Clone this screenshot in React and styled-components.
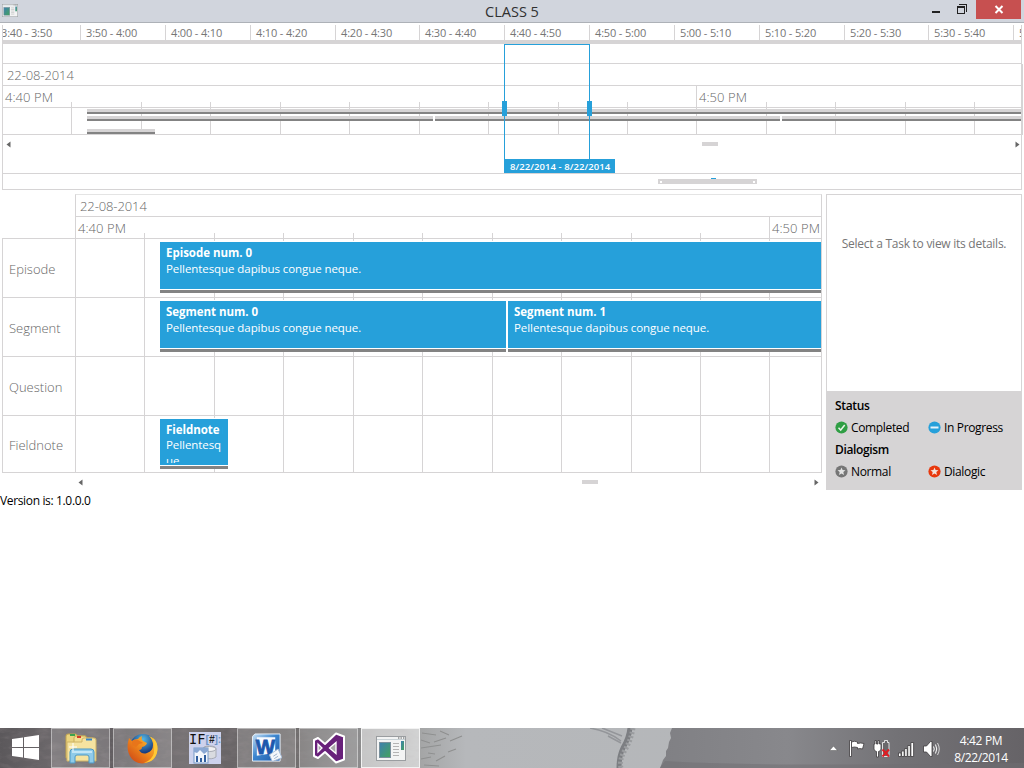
import React from 'react';

import styled, { createGlobalStyle, css } from 'styled-components';

const BLUE = '#26a0da';
const LINE = '#d6d4d5';
const SHADOW = '#838383';
const MUTED = '#767676';
const MUTED_LIGHT = '#666';

const GlobalStyle = createGlobalStyle`
  * {
    box-sizing: border-box;
  }

  body {
    background: white;
    font-family: "Open Sans", "Noto Sans", sans-serif;
    margin: 0;
    overflow: hidden;
  }

  svg {
    display: block;
    flex: none;
  }
`;

const Screen = styled.div`
  display: flex;
  flex-direction: column;
  height: 768px;
  width: 1024px;
`;

/* title bar */

const TitleBar = styled.header`
  background: #d1d5dd;
  border-bottom: 1px solid #adb1b7;
  display: grid;
  grid-template-columns: 140px 1fr 140px;
  height: 23px;
`;

const AppIcon = styled.div`
  padding: 4px 0 0 2px;
`;

const Title = styled.h1`
  color: #303030;
  font-size: 14.5px;
  font-weight: 400;
  letter-spacing: 0;
  line-height: 23px;
  margin: 0;
  text-align: center;
`;

const WindowButtons = styled.div`
  display: flex;
  justify-content: flex-end;
  padding-right: 3px;
`;

const WindowButton = styled.button`
  background: ${(props) => (props.$close ? '#c75050' : 'transparent')};
  border: 0;
  height: 19px;
  padding: 0;
  width: ${(props) => (props.$close ? 45 : 26)}px;
`;

/* overview */

const Overview = styled.section`
  border: 1px solid ${LINE};
  border-top: 0;
  display: flex;
  flex-direction: column;
  height: 165px;
  margin: 2px 2px 0;
  position: relative;
`;

const Slots = styled.div`
  border-bottom: 4px solid ${LINE};
  display: flex;
  height: 19px;
  overflow: hidden;
`;

const Slot = styled.div`
  border-left: ${(props) => (props.$first ? 0 : 1)}px solid ${LINE};
  color: ${MUTED};
  flex: none;
  font-size: 11px;
  letter-spacing: -0.16px;
  line-height: 16px;
  padding-left: ${(props) => (props.$first ? 0 : 5)}px;
  text-indent: ${(props) => (props.$first ? -2 : 0)}px;
  white-space: nowrap;
  width: ${(props) => props.$width}px;
`;

const Spacer = styled.div`
  border-bottom: 1px solid ${LINE};
  height: 20px;
`;

const OverviewScale = styled.div`
  box-shadow: 2px 0 ${LINE};
`;

const scaleText = css`
  color: ${MUTED_LIGHT};
  font-size: 13px;
  font-weight: 300;
  letter-spacing: -0.1px;
  line-height: 22px;
  white-space: nowrap;
`;

const DateRow = styled.div`
  ${scaleText}
  border-bottom: 1px solid ${LINE};
  height: 22px;
  padding-left: 4px;
`;

const Chart = styled.div`
  border-bottom: 1px solid ${LINE};
  display: grid;
  grid-template-rows: ${(props) => props.$height}px;
  grid-template-columns: 100%;
  overflow: hidden;

  > * {
    grid-area: 1 / 1;
  }
`;

const Hours = styled.div`
  display: flex;
  height: 22px;
  border-bottom: 1px solid ${LINE};
`;

const Hour = styled.div`
  ${scaleText}
  flex: none;
  letter-spacing: 0.05px;
  padding-left: 2px;
  width: ${(props) => props.$width}px;
`;

const Ticks = styled.div`
  align-items: flex-end;
  display: flex;
  overflow: hidden;
`;

const Tick = styled.div`
  border-right: 1px solid ${LINE};
  flex: none;
  height: ${(props) => (props.$major ? '100%' : 'calc(100% - 16px)')};
  width: ${(props) => props.$width}px;
`;

const MiniLanes = styled.div`
  display: flex;
  flex-direction: column;
  gap: 2px;
  padding-top: 23px;
`;

const MiniLane = styled.div`
  display: flex;
  gap: 2px;
  height: 5px;
  padding-left: 84px;
`;

const MiniBar = styled.div`
  background: ${LINE};
  border-bottom: 2px solid ${SHADOW};
  flex: ${(props) => (props.$width ? 'none' : 1)};
  width: ${(props) => props.$width}px;
`;

const Scroller = styled.div`
  align-items: center;
  display: flex;
  height: ${(props) => props.$height}px;
  padding: 0 ${(props) => props.$right}px 0 3px;
`;

const Thumb = styled.div`
  background: ${LINE};
  height: 4px;
  margin: 0 auto 0 ${(props) => props.$offset}px;
  width: 16px;
`;

const RangeGap = styled.div`
  border-bottom: 1px solid ${LINE};
  flex: 1;
`;

const RangeRow = styled.div`
  height: 15px;
  padding: 4px 0 0 655px;
`;

const RangeTrack = styled.div`
  background: linear-gradient(${BLUE}, ${BLUE}) 53px 0 / 5px 1px no-repeat,
    linear-gradient(white, white) 2px 3px / 2px 2px no-repeat,
    linear-gradient(white, white) 95px 3px / 2px 2px no-repeat,
    linear-gradient(${LINE}, ${LINE}) 0 1px / 99px 5px no-repeat;
  height: 6px;
  width: 99px;
`;

/* the selected window floats over the overview */
const Selection = styled.div`
  border: 1px solid ${BLUE};
  border-bottom: 0;
  display: flex;
  height: 129px;
  justify-content: space-between;
  left: 501px;
  padding-top: 56px;
  position: absolute;
  top: 19px;
  width: 86px;
`;

const Handle = styled.div`
  background: ${BLUE};
  height: 15px;
  margin: 0 -3px;
  width: 5px;
`;

const SelectionLabel = styled.div`
  background: ${BLUE};
  bottom: 0;
  color: white;
  font-size: 9.5px;
  font-weight: 600;
  height: 14px;
  left: -1px;
  letter-spacing: 0.07px;
  line-height: 15px;
  padding-left: 6px;
  position: absolute;
  white-space: nowrap;
  width: 111px;
`;

/* gantt and details */

const Main = styled.main`
  display: grid;
  grid-template-columns: 73px 747px 200px;
  height: 296px;
  margin: 4px 2px 0;
`;

const LaneLabels = styled.div`
  border-left: 1px solid ${LINE};
  border-top: 1px solid ${LINE};
  height: 235px;
  margin-top: 44px;
`;

const LaneLabel = styled.div`
  border-bottom: 1px solid ${LINE};
  color: ${MUTED_LIGHT};
  font-size: 13px;
  font-weight: 300;
  height: ${(props) => (props.$last ? 57 : 59)}px;
  letter-spacing: 0;
  line-height: ${(props) => (props.$last ? 59 : 61)}px;
  padding-left: 6px;
`;

const Gantt = styled.div`
  min-width: 0;
`;

const GanttFrame = styled.div`
  border: 1px solid ${LINE};
  border-bottom: 0;
  border-top-color: #e4e4e4;
`;

const Lanes = styled.div`
  display: flex;
  flex-direction: column;
  padding-top: 22px;
`;

const Lane = styled.div`
  border-bottom: ${(props) => (props.$last ? 0 : 1)}px solid ${LINE};
  display: flex;
  gap: 2px;
  height: ${(props) => (props.$last ? 56 : 59)}px;
  padding: 2px 0 3px 84px;
`;

const Task = styled.div`
  background: ${BLUE};
  border-bottom: 3px solid ${SHADOW};
  border-top: 1px solid white;
  box-shadow: inset 0 -1px white;
  color: white;
  flex: ${(props) => (props.$width ? 'none' : 1)};
  font-size: 11.5px;
  height: ${(props) => (props.$short ? 51 : 52)}px;
  line-height: 16px;
  overflow: hidden;
  padding: 3px 5px 0 6px;
  width: ${(props) => props.$width}px;
`;

const TaskName = styled.div`
  font-weight: 700;
  letter-spacing: -0.03px;
  overflow: hidden;
  white-space: nowrap;
`;

const TaskText = styled.div`
  height: ${(props) => (props.$short ? 26 : 32)}px;
  letter-spacing: -0.07px;
  margin-top: ${(props) => (props.$short ? -1 : 0)}px;
  overflow: hidden;
  overflow-wrap: anywhere;
`;

const Side = styled.aside`
  display: flex;
  flex-direction: column;
  margin-left: 4px;
  width: 196px;
`;

const Details = styled.div`
  border: 1px solid ${LINE};
  border-bottom: 0;
  color: ${MUTED};
  font-size: 12px;
  height: 197px;
  letter-spacing: -0.26px;
  line-height: 16px;
  padding-top: 41px;
  text-align: center;
  white-space: nowrap;
`;

const Legend = styled.div`
  background: ${LINE};
  color: black;
  display: grid;
  font-size: 12px;
  grid-template-columns: 93px 1fr;
  grid-template-rows: repeat(4, 22px);
  height: 99px;
  letter-spacing: -0.35px;
  line-height: 22px;
  padding: 4px 0 0 9px;
`;

const LegendTitle = styled.div`
  font-weight: 600;
  grid-column: 1 / 3;
`;

const LegendItem = styled.div`
  align-items: center;
  display: flex;
  gap: 3px;
  white-space: nowrap;

  svg {
    margin-top: -1px;
  }
`;

const Version = styled.div`
  flex: 1;
  font-size: 12px;
  letter-spacing: -0.35px;
  line-height: 16px;
  padding-top: 3px;
`;

/* taskbar */

const Taskbar = styled.footer`
  display: grid;
  grid-template: 40px / 1024px;
  height: 40px;

  > * {
    grid-area: 1 / 1;
  }
`;

const TaskbarItems = styled.div`
  display: flex;
  z-index: 1;
`;

const StartButton = styled.div`
  padding: 7px 0 0 12px;
  width: 51px;
`;

const AppButton = styled.div`
  align-items: center;
  background: ${(props) => (props.$active ? 'rgba(255, 255, 255, 0.5)' : 'rgba(255, 255, 255, 0.16)')};
  border: 1px solid ${(props) => (props.$active ? '#f2f2f2' : 'rgba(255, 255, 255, 0.42)')};
  display: flex;
  height: 40px;
  justify-content: center;
  margin-right: 3px;
  width: 59px;

  ${(props) => props.$plain && css`
    background: none;
    border-color: transparent;
  `}
`;

const Tray = styled.div`
  align-items: center;
  display: flex;
  margin-left: auto;
  padding-top: 2px;
`;

const Clock = styled.div`
  color: white;
  font-size: 12px;
  letter-spacing: -0.35px;
  line-height: 17px;
  margin: 0 14px 0 5px;
  text-align: center;
  width: 58px;
`;

const slots = [
  ['3:40 - 3:50', 77],
  ['3:50 - 4:00', 85],
  ['4:00 - 4:10', 85],
  ['4:10 - 4:20', 85],
  ['4:20 - 4:30', 84],
  ['4:30 - 4:40', 85],
  ['4:40 - 4:50', 85],
  ['4:50 - 5:00', 85],
  ['5:00 - 5:10', 85],
  ['5:10 - 5:20', 85],
  ['5:20 - 5:30', 84],
  ['5:30 - 5:40', 85],
  ['5:40 - 5:50', 85]
];

const overviewTicks = [69, 70, 69, 70, 69, 70, 69, 70, 69, 69, 70, 69, 70, 69];
const ganttTicks = [69, 70, 69, 70, 69, 70, 69, 70, 69, 69];

const lanes = [
  { label: 'Episode', tasks: [{ name: 'Episode num. 0' }] },
  { label: 'Segment', tasks: [{ name: 'Segment num. 0', width: 346 }, { name: 'Segment num. 1' }] },
  { label: 'Question', tasks: [] },
  { label: 'Fieldnote', tasks: [{ name: 'Fieldnote num. 0', width: 68 }] }
];

const TimeTicks = ({ widths }) => (
  <Ticks>
    {widths.map((width, i) => <Tick key={i} $width={width} $major={i === 9} />)}
  </Ticks>
);

const Arrow = ({ right }) => (
  <svg width="5" height="7" viewBox="0 0 5 7">
    <path d={right ? 'M0.5 0.5v6L4.5 3.5z' : 'M4.5 0.5v6L0.5 3.5z'} fill="#666" />
  </svg>
);

const STAR = 'M6.5 2.4l1.1 2.7 2.9.2-2.2 1.8.7 2.9-2.5-1.6L4 10l.7-2.9-2.2-1.8 2.9-.2z';

const StatusIcon = ({ color, children }) => (
  <svg width="13" height="13" viewBox="0 0 13 13">
    <circle cx="6.500" cy="6.500" r="6.100" fill={color} />
    {children}
  </svg>
);

const WindowIcon = ({ width, height }) => (
  <svg width={width} height={height} viewBox="0 0 30 25" preserveAspectRatio="none">
    <defs>
      <linearGradient id="pane" x1="0" y1="0" x2="1" y2="1">
        <stop offset="0" stopColor="#3e7fb0" />
        <stop offset="1" stopColor="#43a35c" />
      </linearGradient>
    </defs>
    <rect x="0.500" y="0.500" width="29" height="24" fill="#f3f4f4" stroke="#9a9da0" />
    <path d="M1 3.500h28" stroke="#c9d2d6" />
    <path d="M22 2h1.400M24.500 2h1.400M27 2h1.400" stroke="#555" />
    <rect x="3.500" y="6.500" width="11" height="15" fill="url(#pane)" stroke="#79909c" />
    <path d="M17 7.500h6M17 10.500h6M17 13.500h6M17 16.500h6M17 19.500h6" stroke="#b4b4b4" />
    <rect x="25" y="5" width="3" height="9" fill="url(#pane)" />
  </svg>
);

const Wallpaper = () => (
  <svg width="1024" height="40" viewBox="0 0 1024 40">
    <defs>
      <linearGradient id="wall">
        <stop offset="0" stopColor="#5b585b" />
        <stop offset="0.05" stopColor="#6b676a" />
        <stop offset="0.11" stopColor="#625e61" />
        <stop offset="0.18" stopColor="#777375" />
        <stop offset="0.22" stopColor="#696567" />
        <stop offset="0.29" stopColor="#716e6e" />
        <stop offset="0.34" stopColor="#888889" />
        <stop offset="0.4" stopColor="#a0a1a1" />
        <stop offset="0.455" stopColor="#b6b8bb" />
        <stop offset="1" stopColor="#b3b5b7" />
      </linearGradient>
      <linearGradient id="slate">
        <stop offset="0" stopColor="#808084" />
        <stop offset="0.35" stopColor="#88888c" />
        <stop offset="0.65" stopColor="#737276" />
        <stop offset="1" stopColor="#666367" />
      </linearGradient>
      <filter id="grain" x="0" y="0" width="100%" height="100%">
        <feTurbulence type="fractalNoise" baseFrequency="0.08 0.18" numOctaves="3" seed="4" />
        <feColorMatrix values="0 0 0 0 0.25  0 0 0 0 0.22  0 0 0 0 0.23  1.6 0 0 0 -0.65" />
      </filter>
      <filter id="soft"><feGaussianBlur stdDeviation="0.7" /></filter>
    </defs>
    <rect width="1024" height="40" fill="url(#wall)" />
    <rect width="420" height="40" filter="url(#grain)" opacity="0.5" />
    <path d="M672 0h352v40H660l2-5 1-3 3-4 0-5 2-3 1-6 2-4-1-5z" fill="url(#slate)" />
    <path d="M665 33q90 6 359 2v5H660z" fill="#6f6e72" opacity="0.500" />
    <g filter="url(#soft)" fill="none">
      <path d="M630 0q-1 10-7 20-4 8-4 20" stroke="#7c7e82" strokeWidth="5" />
      <path d="M633 0q-2 12-8 22t-4 18" stroke="#9a9c9f" strokeWidth="5" strokeDasharray="2 2" />
      <path d="M590 0q18 3 31 13M602 0l20 8M608 8l13 7" stroke="#94969a" strokeWidth="1.500" />
      <path
          d="M422 5l14 2M440 3l9 4M421 12l9 3M434 14l12-4M450 13l12-5M421 20l20-3M428 25l7 1M421 31l10-2M436 33l9-5M448 24l8-3M424 37l15 1"
          stroke="#8f9090"
          strokeWidth="1.200" />
    </g>
  </svg>
);

const StartIcon = () => (
  <svg width="28" height="26" viewBox="0 0 28 26">
    <path d="M0 4l11-1.600V12H0zM12 2.200L27 0v12H12zM0 13h11v9.600L0 21zM12 13h15v12l-15-2.200z" fill="white" />
  </svg>
);

const ExplorerIcon = () => (
  <svg width="34" height="32" viewBox="0 0 34 32">
    <path d="M2 4q0-2 2-2h8l2 2h8v22H2z" fill="#ead47e" stroke="#bfa24e" />
    <path d="M6 3h5" stroke="#3ba34d" strokeWidth="2" />
    <path d="M10 6q0-2 2-2h9l2 2h6v20H10z" fill="#f3df92" stroke="#c9ac58" />
    <path d="M13 5h4" stroke="#d43c28" strokeWidth="2" />
    <path d="M18 8q0-2 2-2h10q2 0 2 2v21H3V10h15z" fill="#f5e3a0" stroke="#ceb366" />
    <path d="M22 7.500h6" stroke="#3684c7" strokeWidth="2" />
    <path d="M6 31V20q0-3 3-3h18q3 0 3 3v11h-5v-6q0-2-2-2H13q-2 0-2 2v6z" fill="#8fcbe9" stroke="#4d98c4" />
    <path d="M8 20h20" stroke="#d5effa" strokeWidth="1.500" />
    <path d="M9 11v8M5 15h8" stroke="white" />
  </svg>
);

const FirefoxIcon = () => (
  <svg width="31" height="31" viewBox="0 0 31 31">
    <defs>
      <radialGradient id="globe" cx="0.500" cy="0.200">
        <stop offset="0" stopColor="#57b8e4" />
        <stop offset="1" stopColor="#173c80" />
      </radialGradient>
      <linearGradient id="fox" x1="1" y1="0" x2="0" y2="1">
        <stop offset="0" stopColor="#ffd23c" />
        <stop offset="0.500" stopColor="#ee861c" />
        <stop offset="1" stopColor="#c93c14" />
      </linearGradient>
    </defs>
    <circle cx="16" cy="14.500" r="13.500" fill="url(#globe)" />
    <path d="M2 5l3 3q2-2 6-2 1-2 4-3-1 3 1 5l4 2q-1 3-5 4 0 3-3 3 3 5 8 3 6-2 6-8 0-5-4-9 6 2 8 9 2 12-8 17-10 4-17-3Q-2 18 2 5z" fill="url(#fox)" />
    <path d="M26 5q5 4 4.500 12Q29 29 17 30q8-3 10-10 1-8-1-15z" fill="#ffc935" />
    <path d="M5 8q3-2 6-1l5 3-4 1-3 3-4-2z" fill="#e8751a" />
  </svg>
);

const MetricsIcon = () => (
  <svg width="32" height="32" viewBox="0 0 32 32">
    <rect width="32" height="32" fill="#cdd2ed" />
    <text x="0" y="11.500" fontFamily="DejaVu Sans Mono" fontSize="13.500" fill="#111">IF</text>
    <text x="16.500" y="11" fontFamily="Liberation Sans" fontSize="10.500" fontWeight="700" fill="#6d95c7">[</text>
    <text x="20" y="11" fontFamily="Liberation Sans" fontSize="10" fontStyle="italic" fontWeight="700" fill="#222">#</text>
    <text x="25.500" y="11" fontFamily="Liberation Sans" fontSize="10" fontWeight="700" fill="#6d95c7">]:</text>
    <path d="M14 17q0-3 6.500-3t6.500 3v8q-4 3-11 1z" fill="#d9dbe0" stroke="#a7aab4" />
    <ellipse cx="20.500" cy="17" rx="6.500" ry="2.500" fill="#f0f0f2" stroke="#a7aab4" />
    <rect x="5" y="16" width="14" height="15" fill="#f2f5fb" stroke="#7799c8" />
    <path d="M5 16h14v3l-4 3-4-4-3 3-3-1z" fill="#8ba8d3" />
    <path d="M8 30v-6M12 30v-4M16 30v-7" stroke="#325f9e" strokeWidth="2" />
  </svg>
);

const WordIcon = () => (
  <svg width="30" height="30" viewBox="0 0 31 30">
    <defs>
      <linearGradient id="word" x1="0" y1="0" x2="1" y2="1">
        <stop offset="0" stopColor="#c8e2f6" />
        <stop offset="0.45" stopColor="#3d86cf" />
        <stop offset="1" stopColor="#1c55a4" />
      </linearGradient>
    </defs>
    <path d="M3 .5h26v28H.5V3z" fill="url(#word)" stroke="#eaf3fa" />
    <path d="M5 4h19v16l-19 3z" fill="#f7faff" />
    <text x="4" y="21" fontFamily="Liberation Sans" fontSize="20" fontWeight="700" fill="#1d58ad" stroke="#1d58ad" strokeWidth="0.800" textLength="20" lengthAdjust="spacingAndGlyphs">W</text>
    <path d="M18 22l9-6 4 9-10 4z" fill="#f5f7fa" stroke="#a6bbd5" />
    <path d="M22 23.500l4-2.500M23 26l4-2.500" stroke="#9db1cb" />
  </svg>
);

const StudioIcon = () => (
  <svg width="34" height="32" viewBox="0 0 34 32">
    <path d="M2 8l4-2 7 6L24 1.500l8 3v23l-8 3L13 20l-7 6-4-2z" fill="#68217a" stroke="white" strokeWidth="2" strokeLinejoin="round" />
    <path d="M6 12v8l4-4zM24 10.500v11L17.500 16z" fill="#a9a6a9" stroke="white" strokeWidth="1.300" />
  </svg>
);

const TrayIcons = () => (
  <svg width="118" height="20" viewBox="0 0 118 20">
    <path d="M0.500 11.500L4.500 7l4 4.500z" fill="white" stroke="#555" strokeWidth="0.500" />
    <g stroke="#3d3b3d" strokeWidth="0.800" fill="white">
      <path d="M20.500 1.500h2v16h-2z" />
      <path d="M22.500 3q3-1.500 6 0v1.500q3-1 6.500 0L33.500 10q-3-1-5 0V8.500q-3-1-6 0z" />
      <path d="M46 1.500h1.500V5H49V1.500h1.500V5H52v5q0 2-2.500 2.500V18h-2v-5.500Q45 12 45 10V5h1z" />
      <path d="M53.500 3.500h2v-2h3v2h1.500v14h-6.500z" fill="#6a686b" stroke="white" />
      <path d="M69.500 14h2.500v3.500h-2.500zM72.600 12h2.500v5.500h-2.500zM75.700 9.500h2.500v8h-2.500zM78.800 6.500h2.500v11h-2.500zM81.900 3.500h2.700v14h-2.700z" />
      <path d="M94.500 7h3l4-4.500h1.500v15h-1.500l-4-4.500h-3z" />
    </g>
    <path d="M53.500 10.500l6.500 7M60 10.500l-6.500 7" stroke="#e01b22" strokeWidth="2" />
    <g stroke="white" fill="none">
      <path d="M104.500 7.500q1.500 2.500 0 5" />
      <path d="M106.500 5.500q2.500 4.500 0 9" />
      <path d="M108.500 4q3.500 6 0 12" opacity="0.700" />
    </g>
  </svg>
);

const App = () => (
  <Screen>
    <GlobalStyle />
    <TitleBar>
      <AppIcon><WindowIcon width={16} height={13} /></AppIcon>
      <Title>CLASS 5</Title>
      <WindowButtons>
        <WindowButton aria-label="Minimize">
          <svg width="26" height="19"><path d="M8 12h8" stroke="#222" strokeWidth="2" /></svg>
        </WindowButton>
        <WindowButton aria-label="Restore">
          <svg width="26" height="19" shapeRendering="crispEdges">
            <path d="M7.500 13.500v-7h7v7zM7 7.500h8M9 4.500h7.500V12" fill="none" stroke="#222" />
          </svg>
        </WindowButton>
        <WindowButton $close aria-label="Close">
          <svg width="45" height="19"><path d="M19.500 6l7 7M26.500 6l-7 7" stroke="white" strokeWidth="2" /></svg>
        </WindowButton>
      </WindowButtons>
    </TitleBar>

    <Overview>
      <Slots>
        {slots.map(([label, width], i) => (
          <Slot key={label} $first={i === 0} $width={width}>{label}</Slot>
        ))}
      </Slots>
      <Spacer />
      <OverviewScale>
        <DateRow>22-08-2014</DateRow>
        <Chart $height={48}>
          <Hours>
            <Hour $width={694}>4:40 PM</Hour>
            <Hour>4:50 PM</Hour>
          </Hours>
          <TimeTicks widths={overviewTicks} />
          <MiniLanes>
            <MiniLane><MiniBar /></MiniLane>
            <MiniLane>
              <MiniBar $width={346} />
              <MiniBar $width={345} />
              <MiniBar />
            </MiniLane>
            <MiniLane />
            <MiniLane><MiniBar $width={68} /></MiniLane>
          </MiniLanes>
        </Chart>
      </OverviewScale>
      <Scroller $height={18} $right={1}>
        <Arrow />
        <Thumb $offset={691} />
        <Arrow right />
      </Scroller>
      <RangeGap />
      <RangeRow><RangeTrack /></RangeRow>
      <Selection>
        <Handle />
        <Handle />
        <SelectionLabel>8/22/2014 - 8/22/2014</SelectionLabel>
      </Selection>
    </Overview>

    <Main>
      <LaneLabels>
        {lanes.map(({ label }, i) => (
          <LaneLabel key={label} $last={i === 3}>{label}</LaneLabel>
        ))}
      </LaneLabels>
      <Gantt>
        <GanttFrame>
          <DateRow>22-08-2014</DateRow>
          <Chart $height={255}>
            <Hours>
              <Hour $width={694}>4:40 PM</Hour>
              <Hour>4:50 PM</Hour>
            </Hours>
            <TimeTicks widths={ganttTicks} />
            <Lanes>
              {lanes.map(({ label, tasks }, i) => (
                <Lane key={label} $last={i === 3}>
                  {tasks.map(({ name, width }) => (
                    <Task key={name} $width={width} $short={i === 3}>
                      <TaskName>{name}</TaskName>
                      <TaskText $short={i === 3}>Pellentesque dapibus congue neque.</TaskText>
                    </Task>
                  ))}
                </Lane>
              ))}
            </Lanes>
          </Chart>
        </GanttFrame>
        <Scroller $height={18} $right={3}>
          <Arrow />
          <Thumb $offset={499} />
          <Arrow right />
        </Scroller>
      </Gantt>
      <Side>
        <Details>Select a Task to view its details.</Details>
        <Legend>
          <LegendTitle>Status</LegendTitle>
          <LegendItem>
            <StatusIcon color="#2f9e44"><path d="M3.500 6.700l2.200 2.300 4-5" fill="none" stroke="#e8f5e8" strokeWidth="1.500" /></StatusIcon>
            Completed
          </LegendItem>
          <LegendItem>
            <StatusIcon color={BLUE}><path d="M2.500 6.500h8" stroke="#e6f3fa" strokeWidth="2" /></StatusIcon>
            In Progress
          </LegendItem>
          <LegendTitle>Dialogism</LegendTitle>
          <LegendItem>
            <StatusIcon color="#767676"><path d={STAR} fill="#e3e3e3" /></StatusIcon>
            Normal
          </LegendItem>
          <LegendItem>
            <StatusIcon color="#e8380d"><path d={STAR} fill="#f3e3dc" /></StatusIcon>
            Dialogic
          </LegendItem>
        </Legend>
      </Side>
    </Main>

    <Version>Version is: 1.0.0.0</Version>

    <Taskbar>
      <Wallpaper />
      <TaskbarItems>
        <StartButton><StartIcon /></StartButton>
        <AppButton><ExplorerIcon /></AppButton>
        <AppButton><FirefoxIcon /></AppButton>
        <AppButton $plain><MetricsIcon /></AppButton>
        <AppButton><WordIcon /></AppButton>
        <AppButton><StudioIcon /></AppButton>
        <AppButton $active><WindowIcon width={30} height={25} /></AppButton>
        <Tray>
          <TrayIcons />
          <Clock>
            4:42 PM
            <br />
            8/22/2014
          </Clock>
        </Tray>
      </TaskbarItems>
    </Taskbar>
  </Screen>
);

export default App;
